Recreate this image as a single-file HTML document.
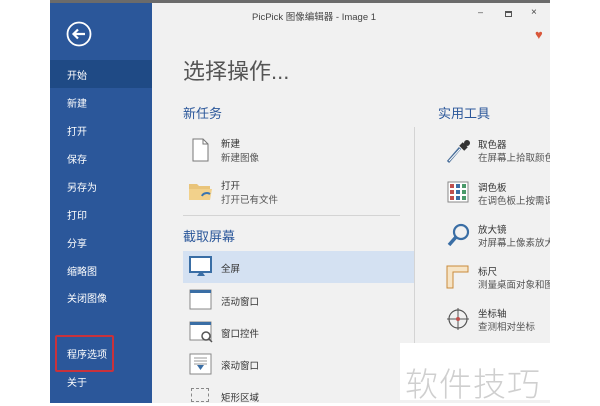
<!DOCTYPE html><html><head><meta charset="utf-8"><style>
*{margin:0;padding:0;box-sizing:border-box}
body{width:600px;height:400px;position:relative;background:#fff;font-family:"Liberation Sans","Noto Sans CJK SC",sans-serif;overflow:hidden}
.a{position:absolute}
.side{left:50px;top:0;width:102px;height:400px;background:#2b579a}
.si{position:absolute;left:67px;color:#fff;font-size:10px}
.main{left:152px;top:0;width:398px;height:400px;background:#f1f1f1}
.t{font-size:9.5px;color:#333}
.s{font-size:9.5px;color:#555}
.h{font-size:13px;color:#2b579a}
</style></head><body>
<div class="a" style="left:50px;top:0;width:500px;height:3px;background:#6b6b6b"></div>
<div class="a side" style="top:3px"></div>
<div class="a" style="left:50px;top:60px;width:102px;height:28px;background:#1f4a85"></div>
<svg class="a" style="left:66px;top:21px" width="26" height="26"><circle cx="13" cy="13" r="11.5" fill="none" stroke="#fff" stroke-width="1.8"/><path d="M19 13H8M12 8.5L7.5 13 12 17.5" fill="none" stroke="#fff" stroke-width="2.2"/></svg>
<div class="si" style="top:67px">开始</div>
<div class="si" style="top:95px">新建</div>
<div class="si" style="top:123px">打开</div>
<div class="si" style="top:151px">保存</div>
<div class="si" style="top:179px">另存为</div>
<div class="si" style="top:207px">打印</div>
<div class="si" style="top:235px">分享</div>
<div class="si" style="top:263px">缩略图</div>
<div class="si" style="top:290px">关闭图像</div>
<div class="si" style="top:346px">程序选项</div>
<div class="si" style="top:374px">关于</div>
<div class="a" style="left:55px;top:335px;width:59px;height:37px;border:2px solid #c8323c;border-radius:2px"></div>
<div class="a main" style="top:3px"></div>
<div class="a" style="left:252px;top:9px;font-size:9.5px;color:#444">PicPick 图像编辑器 - Image 1</div>
<div class="a" style="left:478px;top:7px;font-size:9px;color:#444">–</div>
<div class="a" style="left:505px;top:11px;width:7px;height:6px;border:1px solid #555;border-top-width:2px"></div>
<div class="a" style="left:531px;top:7px;font-size:10px;color:#444">×</div>
<div class="a" style="left:535px;top:27px;font-size:13px;color:#d9573a">♥</div>
<div class="a" style="left:183px;top:54px;font-size:22px;color:#555">选择操作...</div>
<div class="a h" style="left:183px;top:103px">新任务</div>
<div class="a h" style="left:438px;top:103px">实用工具</div>
<svg class="a" style="left:192px;top:138px" width="18" height="24"><path d="M1 1H11L16 6V23H1Z" fill="#fff" stroke="#777"/><path d="M11 1V6H16" fill="none" stroke="#777"/></svg>
<div class="a t" style="left:221px;top:136px">新建</div><div class="a s" style="left:221px;top:150px">新建图像</div>
<svg class="a" style="left:188px;top:180px" width="26" height="22"><path d="M1 4H9L11 6H22V20H1Z" fill="#e9c47a"/><path d="M1 9H24L22 20H1Z" fill="#f2d18b"/><path d="M14 16a5 4 0 0 1 8-2" stroke="#3a74b0" fill="none" stroke-width="2"/></svg>
<div class="a t" style="left:221px;top:178px">打开</div><div class="a s" style="left:221px;top:192px">打开已有文件</div>
<div class="a" style="left:183px;top:215px;width:217px;height:1px;background:#d4d4d4"></div>
<div class="a h" style="left:183px;top:226px">截取屏幕</div>
<div class="a" style="left:183px;top:251px;width:232px;height:32px;background:#d4e1f2"></div>
<div class="a" style="left:414px;top:127px;width:1px;height:273px;background:#d4d4d4"></div>
<svg class="a" style="left:189px;top:256px" width="24" height="22"><rect x="1" y="1" width="21" height="15" fill="#fff" stroke="#3a6ea5" stroke-width="2"/><path d="M8 20H16L14 17H10Z" fill="#3a6ea5"/></svg>
<div class="a t" style="left:221px;top:261px">全屏</div>
<svg class="a" style="left:189px;top:289px" width="24" height="22"><rect x="1" y="1" width="21" height="19" fill="#fff" stroke="#888"/><rect x="1" y="1" width="21" height="3" fill="#3a6ea5"/></svg>
<div class="a t" style="left:221px;top:294px">活动窗口</div>
<svg class="a" style="left:189px;top:321px" width="26" height="24"><rect x="1" y="1" width="21" height="18" fill="#fff" stroke="#888"/><rect x="1" y="1" width="21" height="3" fill="#3a6ea5"/><circle cx="17" cy="15" r="4" fill="#fff" stroke="#555" stroke-width="1.5"/><path d="M20 18L23 21" stroke="#555" stroke-width="1.5"/></svg>
<div class="a t" style="left:221px;top:326px">窗口控件</div>
<svg class="a" style="left:189px;top:353px" width="24" height="22"><rect x="1" y="1" width="21" height="20" fill="#fff" stroke="#888"/><path d="M5 5H18M5 8H18M5 11H18" stroke="#999"/><path d="M8 12H15L11.5 17Z" fill="#3a6ea5"/></svg>
<div class="a t" style="left:221px;top:358px">滚动窗口</div>
<div class="a" style="left:191px;top:388px;width:18px;height:14px;border:1px dashed #888"></div>
<div class="a t" style="left:221px;top:390px">矩形区域</div>
<svg class="a" style="left:446px;top:138px" width="26" height="26"><path d="M2 24L14 10" stroke="#4a6f9a" stroke-width="3"/><path d="M3 23L14 11" stroke="#fff" stroke-width="1"/><path d="M15 6L20 11" stroke="#333" stroke-width="5"/><circle cx="21" cy="5" r="3" fill="#333"/></svg>
<div class="a t" style="left:478px;top:137px">取色器</div><div class="a s" style="left:478px;top:150px">在屏幕上拾取颜色</div>
<svg class="a" style="left:447px;top:181px" width="22" height="22"><rect x="1" y="1" width="20" height="20" fill="#fff" stroke="#888"/><g><rect x="3" y="3" width="4" height="4" fill="#c0504d"/><rect x="9" y="3" width="4" height="4" fill="#3a6ea5"/><rect x="15" y="3" width="4" height="4" fill="#4a9a6a"/><rect x="3" y="9" width="4" height="4" fill="#c0504d"/><rect x="9" y="9" width="4" height="4" fill="#3a6ea5"/><rect x="15" y="9" width="4" height="4" fill="#4a9a6a"/><rect x="3" y="15" width="4" height="4" fill="#c0504d"/><rect x="9" y="15" width="4" height="4" fill="#3a6ea5"/><rect x="15" y="15" width="4" height="4" fill="#4a9a6a"/></g></svg>
<div class="a t" style="left:478px;top:180px">调色板</div><div class="a s" style="left:478px;top:193px">在调色板上按需调</div>
<svg class="a" style="left:446px;top:222px" width="26" height="26"><circle cx="15" cy="10" r="7" fill="none" stroke="#3a6ea5" stroke-width="2.2"/><path d="M10 15L3 23" stroke="#3a6ea5" stroke-width="3.5"/></svg>
<div class="a t" style="left:478px;top:222px">放大镜</div><div class="a s" style="left:478px;top:235px">对屏幕上像素放大</div>
<svg class="a" style="left:446px;top:265px" width="24" height="24"><path d="M1 1H22V7H7V23H1Z" fill="#f6e4c6" stroke="#c98a3a"/></svg>
<div class="a t" style="left:478px;top:264px">标尺</div><div class="a s" style="left:478px;top:277px">测量桌面对象和图</div>
<svg class="a" style="left:446px;top:307px" width="24" height="24"><circle cx="12" cy="12" r="9" fill="none" stroke="#555" stroke-width="1.2"/><path d="M12 1V23M1 12H23" stroke="#555"/><circle cx="12" cy="12" r="2" fill="#c0504d"/></svg>
<div class="a t" style="left:478px;top:306px">坐标轴</div><div class="a s" style="left:478px;top:319px">查测相对坐标</div>
<div class="a" style="left:550px;top:0;width:50px;height:400px;background:#fff"></div>
<div class="a" style="left:400px;top:343px;width:200px;height:57px;background:#fff"></div>
<div class="a" style="left:405px;top:358px;font-size:33px;color:#cfcfcf;letter-spacing:1px;font-family:'Noto Sans CJK SC',sans-serif;font-weight:300">软件技巧</div>
</body></html>
